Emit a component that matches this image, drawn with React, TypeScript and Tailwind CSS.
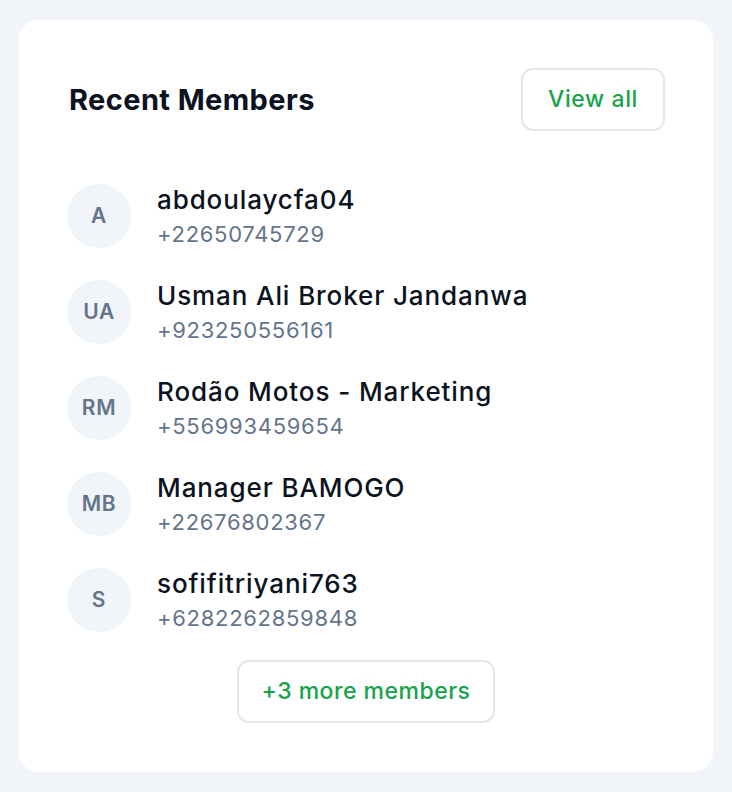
import React from "react";

const members = [
  { initials: "A", name: "abdoulaycfa04", phone: "+22650745729" },
  { initials: "UA", name: "Usman Ali Broker Jandanwa", phone: "+923250556161" },
  { initials: "RM", name: "Rodão Motos - Marketing", phone: "+556993459654" },
  { initials: "MB", name: "Manager BAMOGO", phone: "+22676802367" },
  { initials: "S", name: "sofifitriyani763", phone: "+6282262859848" },
];

export default function App() {
  return (
    <div
      className="min-h-[792px] w-[732px] bg-[#f1f5f9] pt-[20px] pl-[19px]"
      style={{ fontFamily: "Inter, 'Noto Sans', sans-serif" }}
    >
      <div className="w-[694px] h-[752px] bg-white rounded-[20px] p-[48px] flex flex-col">
        <div className="flex items-center justify-between">
          <h2 className="text-[29px] font-bold text-[#0b1220] tracking-[0.4px] pl-[2px]">
            Recent Members
          </h2>
          <button className="h-[63px] w-[144px] rounded-[12px] border-2 border-[#e2e8f0] text-[#16a34a] text-[23px] font-medium tracking-[0.6px]">
            View all
          </button>
        </div>
        <div className="mt-[53px] flex flex-col gap-[32px]">
          {members.map((m) => (
            <div key={m.name} className="h-[64px] flex items-center gap-[26px]">
              <div className="w-[64px] h-[64px] shrink-0 rounded-full bg-[#f1f5f9] flex items-center justify-center text-[21px] font-semibold text-[#64748b] tracking-[0.6px]">
                {m.initials}
              </div>
              <div className="flex flex-col">
                <div className="text-[26px] leading-[32px] font-medium text-[#0b1220] tracking-[0.9px]">{m.name}</div>
                <div className="mt-[4px] text-[22px] leading-[28px] text-[#64748b] tracking-[0.7px]">{m.phone}</div>
              </div>
            </div>
          ))}
        </div>
        <div className="mt-[28px] flex justify-center">
          <button className="h-[63px] w-[258px] rounded-[12px] border-2 border-[#e2e8f0] text-[#16a34a] text-[23px] font-medium tracking-[0.5px]">
            +3 more members
          </button>
        </div>
      </div>
    </div>
  );
}
